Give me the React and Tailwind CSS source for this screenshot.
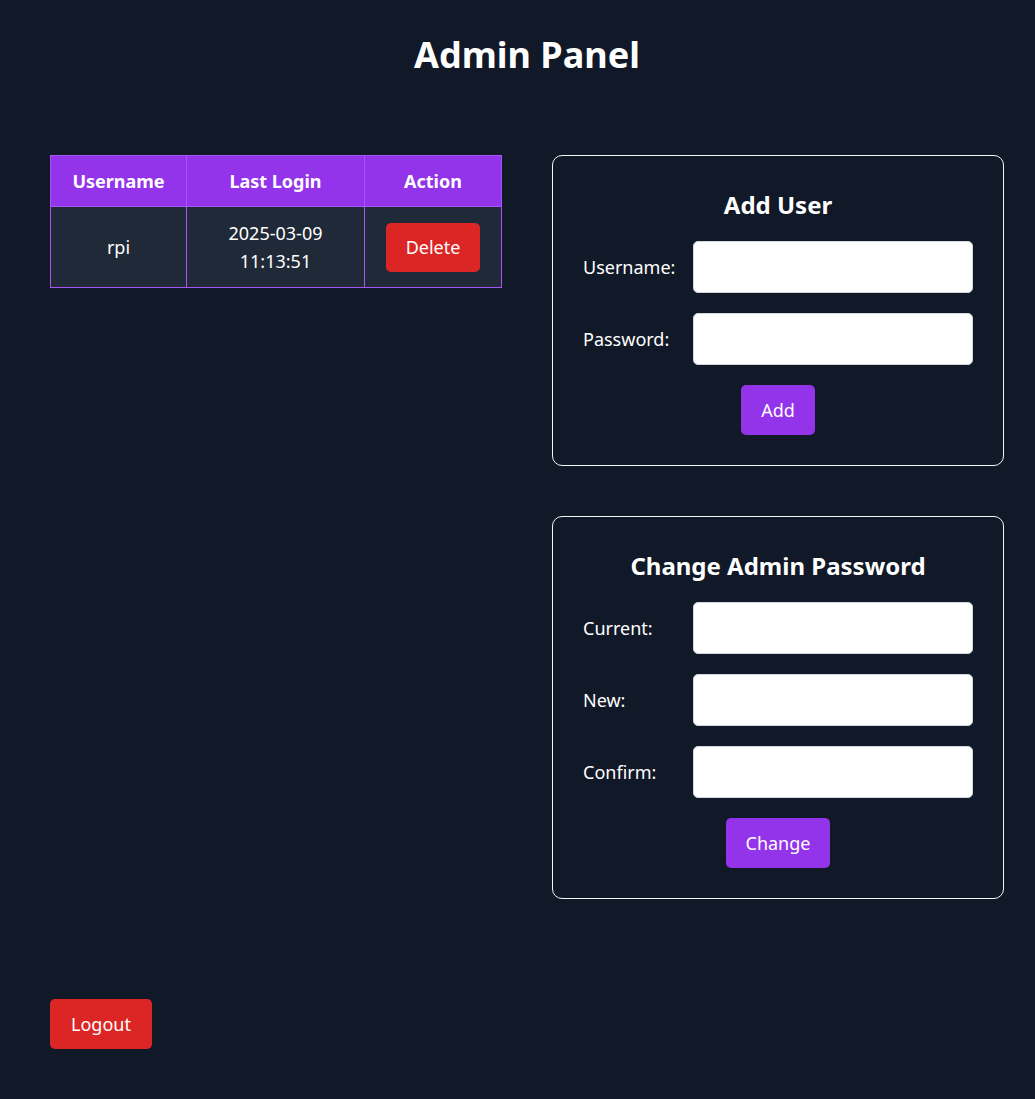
import React from "react";

const users = [{ username: "rpi", lastLogin: ["2025-03-09", "11:13:51"] }];

const Field = ({ label, type = "text" }) => (
  <div className="flex items-center">
    <label className="w-[110px] shrink-0 text-lg text-white">{label}</label>
    <input
      type={type}
      className="h-[52px] w-full min-w-0 flex-1 rounded-[5px] border border-gray-300 bg-white px-3 text-lg text-black outline-none"
    />
  </div>
);

const Card = ({ title, children, button }) => (
  <div className="rounded-[10px] border border-gray-100 px-[30px] pt-[33px] pb-[30px]">
    <h2 className="mb-[20px] text-center text-2xl font-bold text-white">{title}</h2>
    <div className="flex flex-col gap-5">
      {children}
      <div className="flex justify-center">
        <button className="h-[50px] rounded-[5px] bg-[#9333ea] px-5 text-lg text-white">
          {button}
        </button>
      </div>
    </div>
  </div>
);

export default function App() {
  return (
    <div
      className="min-h-[1099px] bg-[#111827] pl-[50px] pr-[31px] pt-[35px] pb-[50px] text-white"
      style={{ fontFamily: '"Noto Sans", "Open Sans", sans-serif' }}
    >
      <h1 className="mb-[80px] text-center text-4xl font-bold">Admin Panel</h1>

      <div className="grid grid-cols-2 items-start gap-[50px]">
        {/* users table */}
        <table className="w-full border-collapse border border-[#a855f7] text-lg">
          <thead>
            <tr className="bg-[#9333ea]">
              <th className="w-[136px] border border-[#a855f7] px-3 py-[11px] font-bold">Username</th>
              <th className="w-[178px] border border-[#a855f7] px-3 py-[11px] font-bold">Last Login</th>
              <th className="border border-[#a855f7] px-3 py-[11px] font-bold">Action</th>
            </tr>
          </thead>
          <tbody>
            {users.map((u) => (
              <tr key={u.username} className="bg-[#1f2937]">
                <td className="border border-[#a855f7] p-3 text-center">{u.username}</td>
                <td className="border border-[#a855f7] p-3 text-center">
                  {u.lastLogin[0]}
                  <br />
                  {u.lastLogin[1]}
                </td>
                <td className="border border-[#a855f7] p-3 text-center">
                  <button className="h-[49px] rounded-[5px] bg-[#dc2626] px-5 text-lg text-white">
                    Delete
                  </button>
                </td>
              </tr>
            ))}
          </tbody>
        </table>

        <div className="flex flex-col gap-[50px]">
          <Card title="Add User" button="Add">
            <Field label="Username:" />
            <Field label="Password:" type="password" />
          </Card>
          <Card title="Change Admin Password" button="Change">
            <Field label="Current:" type="password" />
            <Field label="New:" type="password" />
            <Field label="Confirm:" type="password" />
          </Card>
        </div>
      </div>

      <button className="mt-[100px] h-[50px] rounded-[5px] bg-[#dc2626] px-[21px] text-lg text-white">
        Logout
      </button>
    </div>
  );
}
